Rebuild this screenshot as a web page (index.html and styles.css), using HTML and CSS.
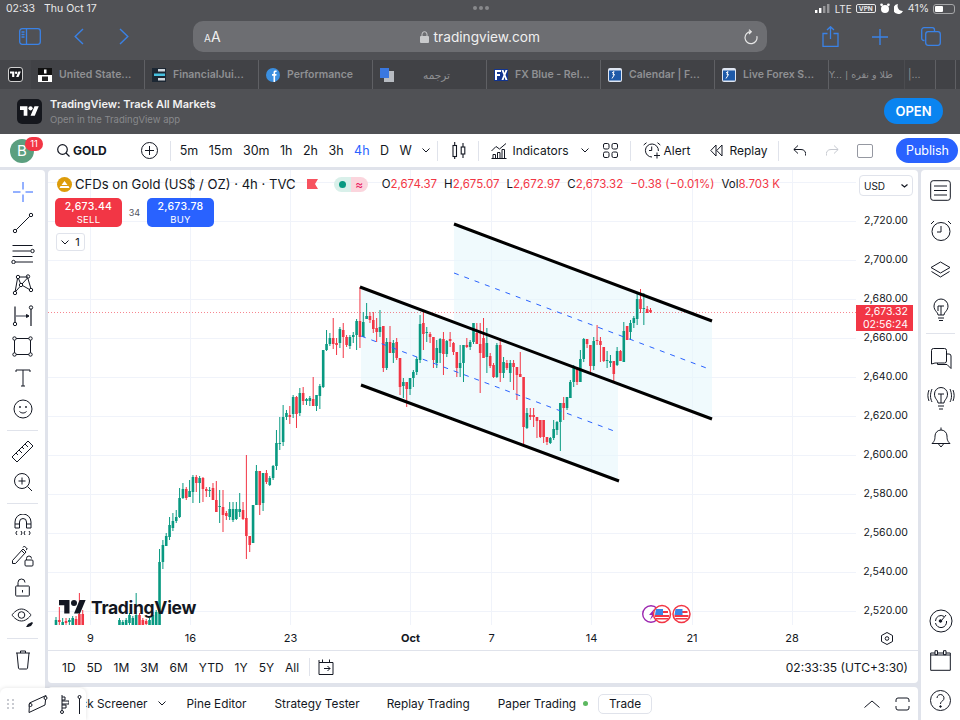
FILE: index.html
```html
<!DOCTYPE html>
<html lang="en">
<head>
    <meta charset="UTF-8">
    <title>TradingView - Gold</title>
    <link rel="stylesheet" href="styles.css">
</head>
<body>
    <svg class="defs" width="0" height="0">
        <symbol id="tv-mark" viewBox="0 0 36 28">
            <path d="M14 22H7V11H0V4h14v18zM28 22h-8l7.5-18h8L28 22z"/>
            <circle cx="20" cy="8" r="4"/>
        </symbol>
    </svg>

    <div class="safari">
        <div class="status-bar">
            <span class="status-time">02:33</span>
            <span class="status-date">Thu Oct 17</span>
            <div class="status-dots"><i></i><i></i><i></i></div>
            <div class="status-right">
                <svg width="15" height="9" viewBox="0 0 15 9" fill="#fff"><rect x="0" y="6" width="2.4" height="3"/><rect x="4" y="4" width="2.4" height="5"/><rect x="8" y="2" width="2.4" height="7" opacity=".4"/><rect x="12" y="0" width="2.4" height="9" opacity=".4"/></svg>
                <span class="status-lte">LTE</span>
                <span class="status-vpn">VPN</span>
                <svg width="10" height="11" viewBox="0 0 10 11" fill="#fff"><circle cx="5" cy="6" r="4"/><circle cx="1.6" cy="1.8" r="1.4"/><circle cx="8.4" cy="1.8" r="1.4"/></svg>
                <svg width="9" height="10" viewBox="0 0 9 10" fill="#fff"><path d="M4 0a5 5 0 1 0 5 7A5 5 0 0 1 4 0z"/></svg>
                <span class="status-pct">41%</span>
                <div class="battery"><div class="battery-fill"></div></div>
            </div>
        </div>

        <div class="safari-toolbar">
            <svg class="sf-sidebar" width="22" height="17" viewBox="0 0 22 17" fill="none" stroke="#3a82e6" stroke-width="1.3"><rect x=".7" y=".7" width="20.6" height="15.6" rx="2.5"/><path d="M7.5 .7v15.6M2.5 4h3M2.5 6.5h3M2.5 9h3"/></svg>
            <svg class="sf-back" width="10" height="17" viewBox="0 0 10 17" fill="none" stroke="#3a82e6" stroke-width="1.4"><path d="M9 1 1.2 8.5 9 16"/></svg>
            <svg class="sf-forward" width="10" height="17" viewBox="0 0 10 17" fill="none" stroke="#3a82e6" stroke-width="1.4"><path d="M1 1l7.8 7.5L1 16"/></svg>
            <div class="url-bar">
                <span class="url-aa"><small>A</small>A</span>
                <span class="url-host">
                    <svg width="9" height="12" viewBox="0 0 9 12" fill="#c9cacc"><path d="M1 5h7a1 1 0 0 1 1 1v5a1 1 0 0 1-1 1H1a1 1 0 0 1-1-1V6a1 1 0 0 1 1-1z"/><path d="M2 5V3.2a2.5 2.5 0 0 1 5 0V5" fill="none" stroke="#c9cacc"/></svg>
                    tradingview.com
                </span>
                <svg class="url-reload" width="14" height="16" viewBox="0 0 14 16" fill="none" stroke="#e6e6e6" stroke-width="1.2"><path d="M7 2.7a6 6 0 1 0 5.8 4.4M5 .6l2.3 2.1L5 5"/></svg>
            </div>
            <svg class="sf-share" width="17" height="21" viewBox="0 0 17 21" fill="none" stroke="#3a82e6" stroke-width="1.3"><path d="M5.5 7.5H1v12.8h15V7.5h-4.5M8.5 13V1M5 4l3.5-3.3L12 4"/></svg>
            <svg class="sf-plus" width="16" height="16" viewBox="0 0 16 16" fill="none" stroke="#3a82e6" stroke-width="1.4"><path d="M8 0v16M0 8h16"/></svg>
            <svg class="sf-tabs" width="20" height="19" viewBox="0 0 20 19" fill="none" stroke="#3a82e6" stroke-width="1.3"><rect x="4.7" y="4.7" width="14.6" height="13.6" rx="2.5"/><path d="M3.5 13.5H3A2.3 2.3 0 0 1 .7 11.2V3A2.3 2.3 0 0 1 3 .7h8.3A2.3 2.3 0 0 1 13.5 3v1"/></svg>
        </div>

        <div class="tabs">
            <div class="tab-pin">
                <div class="tab-pin-icon"><svg width="11" height="9" fill="#fff"><use href="#tv-mark"/></svg></div>
            </div>
            <div class="tab">
                <svg class="tab-icon" width="14" height="14" viewBox="0 0 14 14"><rect width="14" height="14" fill="#111"/><rect y="7" width="14" height="7" fill="#fff"/><rect x="6" y="1.5" width="2.5" height="4" fill="#fff"/><rect x="4" y="8.5" width="6" height="4.5" fill="#222"/></svg>
                <span>United State...</span>
            </div>
            <div class="tab">
                <svg class="tab-icon" width="14" height="14" viewBox="0 0 14 14"><rect width="14" height="14" fill="#1c2733"/><rect x="6" y="1" width="7" height="2.5" fill="#cfd6dc"/><rect x="2" y="5.5" width="11" height="2.5" fill="#46c1e0"/><rect x="6" y="10" width="7" height="2.5" fill="#cfd6dc"/></svg>
                <span>FinancialJui...</span>
            </div>
            <div class="tab">
                <svg class="tab-icon" width="14" height="14" viewBox="0 0 14 14"><circle cx="7" cy="7" r="7" fill="#3b8fe0"/><path d="M7.5 14V7.8H6V6h1.5V4.4C7.5 3 8.4 2.4 9.6 2.4h1V4H9.8c-.5 0-.7.3-.7.7V6h1.5l-.3 1.8H9.1V14z" fill="#fff"/></svg>
                <span>Performance</span>
            </div>
            <div class="tab">
                <svg class="tab-icon" width="14" height="14" viewBox="0 0 14 14"><rect x="4" y="3" width="10" height="11" fill="#b8bcc2"/><rect width="9" height="10" fill="#3a78e0"/></svg>
                <span class="tab-rtl" dir="rtl">ترجمه</span>
            </div>
            <div class="tab">
                <svg class="tab-icon" width="14" height="12" viewBox="0 0 14 12"><rect width="14" height="12" fill="#12348f"/><rect x="1" y="1" width="6" height="2" fill="#fff"/><rect x="1" y="1" width="2" height="10" fill="#fff"/><rect x="1" y="5" width="5" height="2" fill="#fff"/><path d="M7.5 1h2l1 3 1-3h2l-2 5 2 5h-2l-1-3-1 3h-2l2-5z" fill="#fff"/></svg>
                <span>FX Blue - Rel...</span>
            </div>
            <div class="tab">
                <svg class="tab-icon" width="14" height="14" viewBox="0 0 14 14"><rect width="14" height="14" rx="2" fill="#dfe6f2"/><rect x="1" y="2.5" width="12" height="10" fill="#1e5aa8"/><path d="M4 5l2-1.5L5 7l1.5-.5-2.5 4" stroke="#fff" fill="none"/></svg>
                <span>Calendar | F...</span>
            </div>
            <div class="tab">
                <svg class="tab-icon" width="14" height="14" viewBox="0 0 14 14"><rect width="14" height="14" rx="2" fill="#dfe6f2"/><rect x="1" y="2.5" width="12" height="10" fill="#1e5aa8"/><path d="M4 5l2-1.5L5 7l1.5-.5-2.5 4" stroke="#fff" fill="none"/></svg>
                <span>Live Forex S...</span>
            </div>
            <div class="tab tab-narrow"><span class="tab-clip">Y... | طلا و نقره</span></div>
            <div class="tab tab-tiny"><span>|...</span></div>
            <div class="tab tab-mini"></div>
            <div class="tab tab-last"></div>
        </div>

        <div class="smart-banner">
            <div class="banner-icon"><svg width="19" height="15" fill="#fff"><use href="#tv-mark"/></svg></div>
            <div class="banner-text">
                <div class="banner-title">TradingView: Track All Markets</div>
                <div class="banner-sub">Open in the TradingView app</div>
            </div>
            <div class="banner-open">OPEN</div>
        </div>
    </div>

    <div class="tv-header">
        <div class="avatar">B<span class="avatar-badge">11</span></div>
        <div class="symbol">
            <svg width="13" height="13" viewBox="0 0 13 13" fill="none" stroke="#131722" stroke-width="1.2"><circle cx="5.5" cy="5.5" r="4.8"/><path d="M9 9l3.5 3.5"/></svg>
            GOLD
        </div>
        <svg class="compare" width="17" height="17" viewBox="0 0 17 17" fill="none" stroke="#131722"><circle cx="8.5" cy="8.5" r="8"/><path d="M8.5 4v9M4 8.5h9"/></svg>
        <div class="hdr-sep sep-intervals"></div>
        <div class="intervals">
            <span>5m</span><span>15m</span><span>30m</span><span>1h</span><span>2h</span><span>3h</span><span class="active">4h</span><span>D</span><span>W</span>
            <svg width="8" height="5" viewBox="0 0 8 5" fill="none" stroke="#131722"><path d="M.5.5 4 4 7.5.5"/></svg>
        </div>
        <div class="hdr-sep sep-style"></div>
        <svg class="candle-style" width="14" height="17" viewBox="0 0 14 17" fill="none" stroke="#131722" stroke-width="1.1"><rect x="1" y="3.5" width="3.5" height="11"/><path d="M2.7 0v3.5M2.7 14.5V17M11 1v4M11 12v4"/><rect x="9.2" y="5" width="3.6" height="7"/></svg>
        <div class="hdr-sep sep-ind"></div>
        <svg class="ind-icon" width="16" height="16" viewBox="0 0 16 16" fill="none" stroke="#131722"><path d="M.5 8 5 3.5 8.5 6 15 .5M.5 15.5h15M2 15.5v-4h2.5v4M6.5 15.5v-6H9v6M11 15.5v-9h2.5v9"/></svg>
        <span class="hdr-text ind-label">Indicators</span>
        <svg class="ind-caret" width="8" height="5" viewBox="0 0 8 5" fill="none" stroke="#131722"><path d="M.5.5 4 4 7.5.5"/></svg>
        <svg class="layouts" width="15" height="15" viewBox="0 0 15 15" fill="none" stroke="#131722"><rect x=".5" y=".5" width="5.5" height="5.5" rx="1.5"/><rect x="9" y=".5" width="5.5" height="5.5" rx="1.5"/><rect x=".5" y="9" width="5.5" height="5.5" rx="1.5"/><rect x="9" y="9" width="5.5" height="5.5" rx="1.5"/></svg>
        <div class="hdr-sep sep-alert"></div>
        <svg class="alert-icon" width="18" height="17" viewBox="0 0 18 17" fill="none" stroke="#131722"><path d="M9 15A6.5 6.5 0 1 1 15.4 9M.7 3 3.5.7M17.3 3 14.5.7M8.7 4.5V8.5H6M14 10.5v6M11 13.5h6"/></svg>
        <span class="hdr-text alert-label">Alert</span>
        <svg class="replay-icon" width="13" height="13" viewBox="0 0 13 13" fill="none" stroke="#131722"><path d="M6 1 .8 6.5 6 12zM12 1 6.8 6.5 12 12z"/></svg>
        <span class="hdr-text replay-label">Replay</span>
        <div class="hdr-sep sep-undo"></div>
        <svg class="undo-icon" width="13" height="11" viewBox="0 0 13 11" fill="none" stroke="#131722"><path d="M5 .5.8 4.5 5 8.5M1 4.5h7a4.5 4.5 0 0 1 4.5 6"/></svg>
        <svg class="redo-icon" width="13" height="11" viewBox="0 0 13 11" fill="none" stroke="#c6c9d0"><path d="M8 .5l4.2 4L8 8.5M12 4.5H5A4.5 4.5 0 0 0 .5 10.5"/></svg>
        <div class="hdr-square"></div>
        <div class="publish">Publish</div>
    </div>

    <div class="workspace">
        <div class="left-tools">
            <div class="tool"><svg width="22" height="22" viewBox="0 0 22 22" fill="none" stroke="#2962ff"><path d="M1 11h7.5M13.5 11H21M11 1v7.5M11 13.5V21"/></svg></div>
            <div class="tool"><svg width="22" height="22" viewBox="0 0 22 22" fill="none" stroke="#131722"><circle cx="3" cy="19" r="1.7"/><circle cx="19" cy="3" r="1.7"/><path d="M4.3 17.7 17.7 4.3"/></svg></div>
            <div class="tool"><svg width="24" height="20" viewBox="0 0 24 20" fill="none" stroke="#131722"><path d="M1.5 1.5h20M1.5 7h18M1.5 12.5h20M4 18h18"/><circle cx="21.5" cy="7" r="1.7" fill="#fff"/><circle cx="2.5" cy="18" r="1.7" fill="#fff"/></svg></div>
            <div class="tool"><svg width="22" height="22" viewBox="0 0 22 22" fill="none" stroke="#131722"><circle cx="6" cy="3" r="1.7"/><circle cx="16" cy="2.5" r="1.7"/><circle cx="9" cy="11" r="1.7"/><circle cx="19" cy="16" r="1.7"/><circle cx="3" cy="19" r="1.7"/><path d="M6.5 4.5 8.5 9.5M15.5 4 10 10M7 3l9 0M10.5 11.5 17.5 15.5M8 12.5 3.7 17.5M15.8 4.2 18.8 14.3M5.5 4.5 3.2 17.3"/></svg></div>
            <div class="tool"><svg width="22" height="22" viewBox="0 0 22 22" fill="none" stroke="#131722"><path d="M3 1.5v16M19 4v17" stroke-width="1.2"/><circle cx="3" cy="19" r="1.7"/><circle cx="19" cy="2.5" r="1.7"/><path d="M4 11h12" stroke="#787b86" stroke-width="1.5"/><path d="M14.5 9.5 17 11l-2.5 1.5z" fill="#131722"/></svg></div>
            <div class="tool"><svg width="21" height="21" viewBox="0 0 21 21" fill="none" stroke="#131722"><rect x="2.5" y="2.5" width="16" height="16"/><circle cx="2.5" cy="2.5" r="1.7" fill="#fff"/><circle cx="18.5" cy="2.5" r="1.7" fill="#fff"/><circle cx="2.5" cy="18.5" r="1.7" fill="#fff"/><circle cx="18.5" cy="18.5" r="1.7" fill="#fff"/></svg></div>
            <div class="tool"><svg width="16" height="18" viewBox="0 0 16 18" fill="none" stroke="#131722"><path d="M1 3V1h14v2M8 1v16M6 17h4"/></svg></div>
            <div class="tool"><svg width="20" height="20" viewBox="0 0 20 20" fill="none" stroke="#131722"><circle cx="10" cy="10" r="9"/><circle cx="7" cy="8" r=".6"/><circle cx="13" cy="8" r=".6"/><path d="M6.5 12.5c2 2 5 2 7 0"/></svg></div>
            <div class="tool-sep"></div>
            <div class="tool"><svg width="23" height="23" viewBox="0 0 23 23" fill="none" stroke="#131722"><path d="M1 17 17 1l5 5L6 22zM5 13l2 2M8 10l3 3M11 7l2 2M14 4l3 3"/></svg></div>
            <div class="tool"><svg width="20" height="20" viewBox="0 0 20 20" fill="none" stroke="#131722"><circle cx="9" cy="9" r="7.5"/><path d="M9 5.5v7M5.5 9h7M14.5 14.5 19 19"/></svg></div>
            <div class="tool-sep"></div>
            <div class="tool"><svg width="18" height="22" viewBox="0 0 18 22" fill="none" stroke="#131722"><path d="M1 14V8a8 8 0 0 1 16 0v6h-4.5V8a3.5 3.5 0 0 0-7 0v6zM1 10h4.5M12.5 10H17M3 17l-1.2 2 1.2 2M15 17l1.2 2-1.2 2M7 17l1 2-1 2M11 17l-1 2 1 2" stroke-linejoin="round"/></svg></div>
            <div class="tool"><svg width="23" height="22" viewBox="0 0 23 22" fill="none" stroke="#131722"><path d="M1.5 15.5 12 4l3 3L4.5 18.5H1.5zM10.5 5.5l3 3M12 2.5l1.3-1.5 3 3L15 5"/><rect x="14" y="15" width="8" height="6" rx="1"/><path d="M15.5 15v-1.5a2.5 2.5 0 0 1 5 0"/></svg></div>
            <div class="tool"><svg width="15" height="19" viewBox="0 0 15 19" fill="none" stroke="#131722"><rect x=".7" y="8" width="13.6" height="10" rx=".7"/><path d="M3 8V4.5a3.5 3.5 0 0 1 7 0M7.5 12v2.5"/></svg></div>
            <div class="tool"><svg width="24" height="20" viewBox="0 0 24 20" fill="none" stroke="#131722"><path d="M1 7s4-6 9.5-6S20 7 20 7s-4 6-9.5 6S1 7 1 7z"/><circle cx="10.5" cy="7" r="3.3"/><path d="M15 19l2-3 4-2 1 1-2 3-3 1z" fill="#131722" stroke="none"/></svg></div>
            <div class="tool-sep tool-sep-low"></div>
            <div class="tool"><svg width="16" height="20" viewBox="0 0 16 20" fill="none" stroke="#131722"><path d="M1 3h14M5.5 3V1h5v2M2 3l1.5 15.3a1 1 0 0 0 1 .7h7a1 1 0 0 0 1-.7L14 3"/></svg></div>
        </div>

        <div class="chart-col">
            <div class="chart-card">
                <div class="chart-pane">
                    <div class="plot">
                        <svg class="plot-svg" id="plot" width="808" height="455" viewBox="48 170 808 455" fill="none">
                            <g stroke="#f0f3fa">
                                <path d="M48 182.5H856M48 221.5H856M48 260.5H856M48 299.5H856M48 338.5H856M48 377.5H856M48 416.5H856M48 455.5H856M48 494.5H856M48 533.5H856M48 572.5H856M48 611.5H856"/>
                                <path d="M90.5 170V625M190.5 170V625M290.5 170V625M410.5 170V625M491.5 170V625M591.5 170V625M692.5 170V625M792.5 170V625"/>
                            </g>
                            <polygon points="361,287 618,384 618,481 361,385" fill="#e6f6fb" fill-opacity=".6"/>
                            <polygon points="454,224 712,321 712,419 454,322" fill="#e6f6fb" fill-opacity=".6"/>
                            <path d="M48 312.5H856" stroke="#f23645" stroke-opacity=".6" stroke-dasharray="1 2"/>
                            <g id="candles"></g>
                            <path d="M361 336 614 431M454 273 709 369" stroke="#2962ff" stroke-dasharray="5 6"/>
                            <path d="M360 287 712 419M361 385 619 481M454 224 712 321" stroke="#000" stroke-width="3"/>
                            <circle cx="651" cy="614" r="8.3" fill="#fff" stroke="#9c27b0" stroke-width="1.4"/>
                            <path d="M655 608l-6 7h3l-2 5 6-7h-3z" fill="#9c27b0"/>
                            <g class="flag"><circle cx="662" cy="614" r="8.5" fill="#fff" stroke="#f23645" stroke-width="1.5"/><path d="M656 611h12v2h-12zM655 615h14v2h-14zM656 618h12v1.5h-12z" fill="#f23645"/><path d="M656 609h7v6h-8z" fill="#3a86e8"/></g>
                            <g class="flag"><circle cx="681.5" cy="614" r="8.5" fill="#fff" stroke="#f23645" stroke-width="1.5"/><path d="M675.5 611h12v2h-12zM674.5 615h14v2h-14zM675.5 618h12v1.5h-12z" fill="#f23645"/><path d="M675.5 609h7v6h-8z" fill="#3a86e8"/></g>
                        </svg>

                        <div class="legend">
                            <div class="legend-main">
                                <svg width="15" height="15" viewBox="0 0 15 15"><circle cx="7.5" cy="7.5" r="7.5" fill="#dd9c0a"/><path d="M4.5 8 7.5 4l3 4z" fill="#fff"/><path d="M2.5 11l1-2h8l1 2z" fill="#fff"/></svg>
                                <span class="legend-title">CFDs on Gold (US$ / OZ) · 4h · TVC</span>
                                <svg class="legend-flag" width="11" height="10" viewBox="0 0 11 10"><path d="M0 0h11L8 5l3 5H0z" fill="#f7525f"/></svg>
                                <div class="legend-pill"><span class="pill-green"><i></i></span><span class="pill-pink">≈</span></div>
                                <div class="ohlc">
                                    <span>O<b>2,674.37</b></span><span>H<b>2,675.07</b></span><span>L<b>2,672.97</b></span><span>C<b>2,673.32</b></span><span><b>−0.38 (−0.01%)</b></span><span>Vol<b>8.703 K</b></span>
                                </div>
                            </div>
                            <div class="trade-row">
                                <div class="trade-btn sell"><strong>2,673.44</strong><span>SELL</span></div>
                                <span class="spread">34</span>
                                <div class="trade-btn buy"><strong>2,673.78</strong><span>BUY</span></div>
                            </div>
                            <div class="collapse">
                                <svg width="8" height="5" viewBox="0 0 8 5" fill="none" stroke="#131722"><path d="M.5.5 4 4 7.5.5"/></svg>
                                1
                            </div>
                        </div>

                        <div class="watermark">
                            <svg width="27" height="21" fill="#131722"><use href="#tv-mark"/></svg>
                            <span>TradingView</span>
                        </div>
                    </div>

                    <div class="price-scale">
                        <span>2,720.00</span><span>2,700.00</span><span>2,680.00</span><span>2,660.00</span><span>2,640.00</span><span>2,620.00</span><span>2,600.00</span><span>2,580.00</span><span>2,560.00</span><span>2,540.00</span><span>2,520.00</span>
                        <div class="currency">USD<svg width="7" height="4" viewBox="0 0 7 4" fill="none" stroke="#131722" stroke-width="1.2"><path d="M.5.5 3.5 3 6.5.5"/></svg></div>
                        <div class="price-tag">2,673.32<br>02:56:24</div>
                    </div>
                </div>

                <svg class="time-axis" width="870" height="25" viewBox="48 625 870 25">
                    <g class="time-labels">
                        <text x="90.5" y="642">9</text><text x="190.5" y="642">16</text><text x="290.5" y="642">23</text><text x="410.5" y="642" class="oct">Oct</text><text x="491.5" y="642">7</text><text x="591.5" y="642">14</text><text x="692" y="642">21</text><text x="792" y="642">28</text>
                    </g>
                    <path d="M887 632.5l5.5 3v6l-5.5 3-5.5-3v-6z" fill="none" stroke="#131722"/>
                    <circle cx="887" cy="638.5" r="1.8" fill="none" stroke="#131722"/>
                </svg>

                <div class="range-bar">
                    <div class="ranges"><span>1D</span><span>5D</span><span>1M</span><span>3M</span><span>6M</span><span>YTD</span><span>1Y</span><span>5Y</span><span>All</span></div>
                    <div class="range-sep"></div>
                    <svg class="goto" width="16" height="16" viewBox="0 0 16 16" fill="none" stroke="#131722"><path d="M1 3.5h14v12H1zM1 3.5V1M4.5 3V.5M11.5 3V.5M6 9.5h6M9.5 7l2.5 2.5L9.5 12"/></svg>
                    <div class="clock">02:33:35 (UTC+3:30)</div>
                </div>
            </div>

            <div class="bottom-bar">
                <span class="tab-screener">Stock Screener<svg width="8" height="5" viewBox="0 0 8 5" fill="none" stroke="#131722"><path d="M.5.5 4 4 7.5.5"/></svg></span>
                <span class="tab-pine">Pine Editor</span>
                <span class="tab-tester">Strategy Tester</span>
                <span class="tab-replay">Replay Trading</span>
                <span class="tab-paper">Paper Trading</span>
                <i class="paper-dot"></i>
                <span class="trade-pill">Trade</span>
                <svg class="bar-up" width="16" height="8" viewBox="0 0 16 8" fill="none" stroke="#131722"><path d="M.5 7.5 8 1l7.5 6.5"/></svg>
                <svg class="bar-max" width="15" height="14" viewBox="0 0 15 14" fill="none" stroke="#131722"><path d="M1 5V3a2 2 0 0 1 2-2h9a2 2 0 0 1 2 2v2M1 9v2a2 2 0 0 0 2 2h9a2 2 0 0 0 2-2V9"/></svg>
            </div>
        </div>

        <div class="right-tools">
            <div class="right-group">
                <div class="rtool"><svg width="21" height="21" viewBox="0 0 21 21" fill="none" stroke="#131722"><rect x=".7" y=".7" width="19.6" height="19.6" rx="2.5"/><path d="M4 6h13M4 10.5h13M4 15h13"/></svg></div>
                <div class="rtool"><svg width="22" height="21" viewBox="0 0 22 21" fill="none" stroke="#131722"><circle cx="11" cy="11.5" r="9"/><path d="M11 6v6H7M1 4l3-3M21 4l-3-3"/></svg></div>
                <div class="rtool"><svg width="21" height="18" viewBox="0 0 21 18" fill="none" stroke="#131722"><path d="M10.5 1 20 6.5 10.5 12 1 6.5zM1.5 10.5l9 5.5 9-5.5"/></svg></div>
                <div class="rtool"><svg width="16" height="23" viewBox="0 0 16 23" fill="none" stroke="#131722"><path d="M5 17c0-3-4-4-4-9a7 7 0 0 1 14 0c0 5-4 6-4 9zM5 13V8h6M8 8v9M5 20h6M6 22.5h4"/></svg></div>
                <div class="right-sep"></div>
                <div class="rtool"><svg width="22" height="21" viewBox="0 0 22 21" fill="none" stroke="#131722"><path d="M1.5 16V2.5a2 2 0 0 1 2-2h11a2 2 0 0 1 2 2V13a2 2 0 0 1-2 2H5l-3.5 1zM16.5 6H19a2 2 0 0 1 2 2v12.5l-4-4H7.5V15"/></svg></div>
                <div class="rtool"><svg width="28" height="24" viewBox="0 0 28 24" fill="none" stroke="#131722"><path d="M11 17c0-3-3.5-4-3.5-9a6.5 6.5 0 0 1 13 0c0 5-3.5 6-3.5 9zM11 8h6M14 8v9M11 20h6M12 23h4M5 3C3 8 3 12 5 16M2 4C.5 8 .5 11 2 15M23 3c2 5 2 9 0 13M26 4c1.5 4 1.5 7 0 11"/></svg></div>
                <div class="rtool"><svg width="20" height="21" viewBox="0 0 20 21" fill="none" stroke="#131722"><path d="M1 16.5c2-2 3-3 3-7.5a6 6 0 0 1 12 0c0 4.5 1 5.500 3 7.500zM1 16.500h18M7.500 17l2.500 3 2.500-3M10 3V.5"/></svg></div>
            </div>
            <div class="right-group">
                <div class="rtool"><svg width="24" height="24" viewBox="0 0 24 24" fill="none" stroke="#131722"><circle cx="12" cy="12" r="11"/><path d="M6.5 12a5.5 5.5 0 0 1 8.5-4.6M17.5 12A5.5 5.5 0 0 1 6.5 14M12.5 11.5 17 6"/><circle cx="11.5" cy="12" r="1.3" fill="#131722"/></svg></div>
                <div class="rtool"><svg width="21" height="21" viewBox="0 0 21 21" fill="none" stroke="#131722"><path d="M.7 5h19.6v15.3H.7zM.7 5V3M20.3 5V3M5 .7h2.5v4H5zM13.5 .7H16v4h-2.5zM7.5 3h6M16 3h4.3M.7 3H5"/></svg></div>
                <div class="rtool"><svg width="21" height="21" viewBox="0 0 21 21" fill="none" stroke="#131722"><circle cx="10.5" cy="10.5" r="10"/><path d="M7 8a3.5 3.5 0 1 1 5.5 2.9c-1.3.9-2 1.7-2 3.1"/><circle cx="10.5" cy="16.5" r=".8" fill="#131722"/></svg></div>
            </div>
        </div>

        <div class="float-panel">
            <div class="grip"><i></i><i></i><i></i><i></i><i></i><i></i></div>
            <svg width="20" height="20" viewBox="0 0 20 20" fill="none" stroke="#131722"><path d="M1.5 9 18 1.5 17 11 1 18.5zM18 3 16 5M2.5 9.5l-1.5 3"/><circle cx="17.5" cy="4" r="1.5" fill="#fff"/><circle cx="2.5" cy="11" r="1.5" fill="#fff"/></svg>
            <svg class="panel-align" width="9" height="19" viewBox="0 0 9 19" fill="none" stroke="#131722"><path d="M2 0v16M2 2h3v3H2M2 6h7v3H2M2 10h4v3H2"/><circle cx="2" cy="17" r="1.5" fill="#fff"/></svg>
            <svg class="panel-pin" width="5" height="19" viewBox="0 0 5 19" fill="none" stroke="#131722"><circle cx="2.5" cy="2" r="1.5"/><path d="M2.5 3.5V19"/></svg>
        </div>
    </div>

    <script src="chart.js"></script>
</body>
</html>
```
FILE: styles.css
```css
* {
    box-sizing: border-box;
}

html, body {
    margin: 0;
    padding: 0;
}

body {
    position: relative;
    width: 960px;
    height: 720px;
    overflow: hidden;
    display: flex;
    flex-direction: column;
    font-family: "Inter", "Noto Sans", sans-serif;
    color: #131722;
    background-color: #e0e3eb;
}

svg {
    display: block;
    flex: none;
}

.defs {
    position: absolute;
}

/* safari chrome */
.safari {
    height: 134px;
    background-color: #505155;
    flex: none;
}

.status-bar {
    height: 17px;
    display: flex;
    align-items: center;
    position: relative;
    padding: 0 5px 0 6px;
    color: #e8e8e9;
    font-size: 10.5px;
}

.status-date {
    margin-left: 9px;
}

.status-dots {
    position: absolute;
    left: 473px;
    top: 6px;
    display: flex;
    gap: 2px;
}

.status-dots i {
    width: 4px;
    height: 4px;
    border-radius: 50%;
    background-color: #88898c;
}

.status-right {
    margin-left: auto;
    display: flex;
    align-items: center;
    gap: 4px;
}

.status-lte {
    margin-left: 1px;
    font-size: 10px;
}

.status-vpn {
    font-size: 6.5px;
    font-weight: 700;
    border: 1px solid #e8e8e9;
    border-radius: 2px;
    padding: 0 2px;
    height: 9px;
    line-height: 8px;
}

.status-pct {
    margin-left: 1px;
}

.battery {
    width: 22px;
    height: 10px;
    border: 1px solid #a5a6a8;
    border-radius: 3px;
    padding: 1px;
}

.battery-fill {
    width: 8px;
    height: 6px;
    border-radius: 1px;
    background-color: #fff;
}

.safari-toolbar {
    height: 43px;
    display: flex;
    align-items: center;
    padding-bottom: 4px;
}

.sf-sidebar {
    margin-left: 19px;
}

.sf-back {
    margin-left: 33px;
}

.sf-forward {
    margin-left: 35px;
}

.url-bar {
    margin-left: 64px;
    width: 574px;
    height: 31px;
    border-radius: 10px;
    background-color: #6d6e72;
    display: flex;
    align-items: center;
    padding: 0 9px 0 11px;
    color: #f0f0f0;
}

.url-aa {
    font-size: 14px;
}

.url-aa small {
    font-size: 10px;
}

.url-host {
    display: flex;
    align-items: center;
    gap: 5px;
    margin-left: 199px;
    font-size: 13.7px;
}

.url-reload {
    margin-left: auto;
}

.sf-share {
    margin-left: 55px;
}

.sf-plus {
    margin-left: 33px;
}

.sf-tabs {
    margin-left: 33px;
}

.tabs {
    height: 29px;
    display: flex;
    background-color: #45464a;
}

.tab-pin {
    width: 31px;
    flex: none;
    display: flex;
    align-items: center;
    justify-content: center;
}

.tab-pin-icon {
    width: 15px;
    height: 15px;
    background-color: #1b1c20;
    border: 1px solid #d0d0d0;
    border-radius: 3px;
    display: flex;
    align-items: center;
    justify-content: center;
}

.tab {
    width: 114px;
    flex: none;
    display: flex;
    align-items: center;
    padding-left: 7px;
    background-color: #414246;
    border-right: 1px solid #5f6064;
    color: #8f9093;
    font-size: 10.5px;
    font-weight: 600;
    white-space: nowrap;
    overflow: hidden;
}

.tab-icon {
    margin-right: 7px;
}

.tab-rtl {
    margin-left: 22px;
    font-family: "DejaVu Sans", sans-serif;
    font-weight: 400;
}

.tab-narrow {
    width: 76px;
    padding-left: 0;
    font-weight: 400;
    border-right-color: #4b4c50;
}

.tab-clip {
    font-family: "DejaVu Sans", sans-serif;
    font-size: 9.5px;
}

.tab-tiny {
    width: 31px;
    padding-left: 3px;
    font-weight: 400;
}

.tab-mini {
    width: 20px;
}

.tab-last {
    flex: 1;
    width: auto;
    min-width: 0;
    padding-left: 0;
    border-right: none;
}

.smart-banner {
    height: 45px;
    display: flex;
    align-items: center;
    padding: 0 17px 1px;
}

.banner-icon {
    width: 25px;
    height: 25px;
    border-radius: 5px;
    background-color: #15171d;
    display: flex;
    align-items: center;
    justify-content: center;
}

.banner-text {
    margin-left: 8px;
}

.banner-title {
    font-size: 11px;
    font-weight: 600;
    color: #f2f2f2;
}

.banner-sub {
    margin-top: 3px;
    font-size: 9.5px;
    color: #88898c;
}

.banner-open {
    margin-left: auto;
    width: 59px;
    height: 26px;
    border-radius: 13px;
    background-color: #0a84f0;
    color: #fff;
    font-size: 13px;
    font-weight: 600;
    line-height: 26px;
    text-align: center;
}

/* tradingview header */
.tv-header {
    height: 33px;
    flex: none;
    display: flex;
    align-items: center;
    background-color: #fff;
    font-size: 12.5px;
}

.avatar {
    position: relative;
    margin-left: 10px;
    width: 24px;
    height: 24px;
    border-radius: 50%;
    background-color: #5b9f7f;
    color: #fff;
    font-size: 15px;
    line-height: 24px;
    text-align: center;
}

.avatar-badge {
    position: absolute;
    left: 15px;
    top: -2px;
    width: 18px;
    height: 14px;
    border-radius: 7px;
    background-color: #f23645;
    color: #fff;
    font-size: 9.5px;
    line-height: 14px;
}

.symbol {
    margin-left: 23px;
    display: flex;
    align-items: center;
    gap: 3px;
    font-weight: 700;
    font-size: 12px;
}

.compare {
    margin-left: 34px;
}

.hdr-sep {
    width: 1px;
    height: 20px;
    flex: none;
    background-color: #e0e3eb;
}

.sep-intervals {
    margin-left: 12px;
}

.intervals {
    margin-left: 9px;
    display: flex;
    align-items: center;
    gap: 10.5px;
}

.intervals .active {
    color: #2962ff;
}

.sep-style {
    margin-left: 7px;
}

.candle-style {
    margin-left: 14px;
}

.sep-ind {
    margin-left: 12px;
}

.ind-icon {
    margin-left: 12px;
}

.hdr-text {
    font-size: 12px;
}

.ind-label {
    margin-left: 5px;
}

.ind-caret {
    margin-left: 12px;
}

.layouts {
    margin-left: 14px;
}

.sep-alert {
    margin-left: 12px;
}

.alert-icon {
    margin-left: 12px;
}

.alert-label {
    margin-left: 3px;
}

.replay-icon {
    margin-left: 20px;
}

.replay-label {
    margin-left: 6px;
}

.sep-undo {
    margin-left: 11px;
}

.undo-icon {
    margin-left: 14px;
}

.redo-icon {
    margin-left: 20px;
}

.hdr-square {
    margin-left: 18px;
    width: 16px;
    height: 14px;
    border: 1px solid #9598a1;
    border-radius: 2px;
}

.publish {
    margin-left: 23px;
    width: 62px;
    height: 25px;
    flex: none;
    border-radius: 13px;
    background-color: #2962ff;
    color: #fff;
    line-height: 25px;
    text-align: center;
}

/* main area */
.workspace {
    position: relative;
    margin-top: 3px;
    flex: 1;
    min-height: 0;
    display: flex;
    background-color: #e0e3eb;
}

.left-tools {
    width: 45px;
    flex: none;
    background-color: #fff;
    border-radius: 0 4px 0 0;
    padding-top: 7px;
}

.tool {
    height: 30.9px;
    display: flex;
    align-items: center;
    justify-content: center;
}

.tool-sep {
    height: 1px;
    margin: 5.5px 7px;
    background-color: #e0e3eb;
}

.tool-sep-low {
    margin-top: 5px;
}

.chart-col {
    margin-left: 3px;
    width: 870px;
    flex: none;
    display: flex;
    flex-direction: column;
}

.chart-card {
    height: 513px;
    flex: none;
    background-color: #fff;
    border-radius: 4px;
    overflow: hidden;
    display: flex;
    flex-direction: column;
}

.chart-pane {
    height: 455px;
    flex: none;
    display: flex;
}

.plot {
    position: relative;
    width: 808px;
    height: 455px;
    flex: none;
    overflow: hidden;
}

.plot-svg {
    position: absolute;
    left: 0;
    top: 0;
}

.legend {
    position: absolute;
    left: 9px;
    top: 6px;
}

.legend-main {
    height: 16px;
    display: flex;
    align-items: center;
}

.legend-title {
    margin-left: 3px;
    font-size: 13.1px;
    white-space: nowrap;
}

.legend-flag {
    margin-left: 11px;
}

.legend-pill {
    margin-left: 16px;
    width: 34px;
    height: 15px;
    display: flex;
    border-radius: 8px;
    overflow: hidden;
}

.pill-green {
    width: 17px;
    background-color: #d9f0ea;
    display: flex;
    align-items: center;
    justify-content: center;
}

.pill-green i {
    width: 7px;
    height: 7px;
    border-radius: 50%;
    background-color: #089981;
}

.pill-pink {
    width: 17px;
    background-color: #fbd5dd;
    color: #e91e63;
    font-size: 12px;
    line-height: 15px;
    text-align: center;
}

.ohlc {
    margin-left: 14px;
    display: flex;
    gap: 7px;
    font-size: 11.5px;
    white-space: nowrap;
}

.ohlc b {
    font-weight: 400;
    color: #f23645;
}

.trade-row {
    margin-top: 6px;
    display: flex;
    align-items: center;
    margin-left: -2px;
}

.trade-btn {
    width: 67px;
    height: 29px;
    border-radius: 5px;
    color: #fff;
    display: flex;
    flex-direction: column;
    align-items: center;
    justify-content: center;
    font-size: 9.5px;
    line-height: 12px;
    letter-spacing: .3px;
}

.trade-btn strong {
    font-size: 10.5px;
    font-weight: 500;
    line-height: 14px;
}

.sell {
    background-color: #f23645;
}

.buy {
    background-color: #2962ff;
}

.spread {
    width: 25px;
    text-align: center;
    font-size: 9px;
    color: #50535e;
}

.collapse {
    margin-top: 6px;
    margin-left: -1px;
    width: 29px;
    height: 18px;
    border: 1px solid #e0e3eb;
    border-radius: 3px;
    display: flex;
    align-items: center;
    justify-content: center;
    gap: 6px;
    font-size: 11px;
}

.watermark {
    position: absolute;
    left: 11px;
    top: 427px;
    display: flex;
    align-items: center;
    gap: 5px;
    color: #131722;
}

.watermark span {
    font-size: 17.5px;
    font-weight: 700;
    letter-spacing: -.3px;
    line-height: 21px;
}

.price-scale {
    position: relative;
    width: 62px;
    flex: none;
    display: flex;
    flex-direction: column;
    align-items: flex-end;
    padding: 44px 10px 0 0;
    font-size: 10.5px;
    color: #131722;
    overflow: hidden;
}

.price-scale > span {
    height: 39px;
    flex: none;
    line-height: 14px;
}

.currency {
    position: absolute;
    left: 3px;
    top: 5px;
    width: 54px;
    height: 21px;
    border: 1px solid #e0e3eb;
    border-radius: 4px;
    padding: 0 4px;
    display: flex;
    align-items: center;
    justify-content: space-between;
    font-size: 10px;
}

.price-tag {
    position: absolute;
    left: 0;
    top: 135px;
    width: 57px;
    height: 26px;
    background-color: #f23645;
    color: #fff;
    line-height: 13px;
    text-align: right;
    padding-right: 5px;
    font-size: 10.5px;
}

.time-axis {
    flex: none;
}

.time-labels text {
    font-size: 11px;
    fill: #131722;
    text-anchor: middle;
}

.time-labels .oct {
    font-weight: 700;
}

.range-bar {
    height: 33px;
    flex: none;
    border-top: 1px solid #e0e3eb;
    display: flex;
    align-items: center;
    font-size: 12px;
}

.ranges {
    margin-left: 14px;
    display: flex;
    gap: 11px;
}

.range-sep {
    margin-left: 10px;
    width: 1px;
    height: 18px;
    background-color: #e0e3eb;
}

.goto {
    margin-left: 8px;
}

.clock {
    margin-left: auto;
    margin-right: 10px;
    font-size: 12px;
}

.bottom-bar {
    margin-top: 4px;
    height: 33px;
    flex: none;
    background-color: #fff;
    border-radius: 4px 4px 0 0;
    display: flex;
    align-items: center;
    font-size: 11.8px;
    white-space: nowrap;
}

.tab-screener {
    margin-left: 14px;
    display: flex;
    align-items: center;
    gap: 10px;
}

.tab-pine {
    margin-left: 21px;
}

.tab-tester {
    margin-left: 28px;
}

.tab-replay {
    margin-left: 27px;
}

.tab-paper {
    margin-left: 28px;
}

.paper-dot {
    margin-left: 6.5px;
    width: 5px;
    height: 5px;
    flex: none;
    border-radius: 50%;
    background-color: #5cb860;
}

.trade-pill {
    margin-left: 10.5px;
    width: 54px;
    height: 20px;
    border: 1px solid #e0e3eb;
    border-radius: 5px;
    line-height: 18px;
    text-align: center;
}

.bar-up {
    margin-left: 212px;
}

.bar-max {
    margin-left: 15px;
}

.right-tools {
    margin-left: 3px;
    flex: 1;
    background-color: #fff;
    border-radius: 4px 0 0 0;
    display: flex;
    flex-direction: column;
    justify-content: space-between;
    padding-top: 1px;
}

.rtool {
    height: 39.5px;
    display: flex;
    align-items: center;
    justify-content: center;
}

.right-sep {
    height: 1px;
    margin: 4px 5px 5px;
    background-color: #e0e3eb;
}

.float-panel {
    position: absolute;
    left: 0;
    bottom: 0;
    width: 86px;
    height: 32px;
    background-color: #fff;
    border-radius: 6px 6px 0 0;
    box-shadow: 0 0 4px rgba(0, 0, 0, .12);
    display: flex;
    align-items: center;
    padding-left: 7px;
}

.grip {
    width: 7px;
    display: grid;
    grid-template-columns: 2px 2px;
    gap: 2px 3px;
    margin-right: 14px;
}

.grip i {
    width: 2px;
    height: 2px;
    background-color: #c9cbd1;
}

.panel-align {
    margin-left: 12px;
}

.panel-pin {
    margin-left: 8px;
}
```
FILE: chart.js
```js
// top, bottom, high, low (page y) and direction for each 4h bar, starting at x = 56
var bars = [
    [620,625,617,625,'g'],[620,622,607,625,'r'],[622,625,618,625,'g'],[621,623,618,625,'r'],
    [620,622,618,625,'g'],[618,625,616,625,'g'],[619,625,616,625,'r'],[614,625,593,625,'r'],
    [614,625,610,625,'r'],
    null,null,null,null,null,null,null,null,null,null,
    [620,625,618,625,'g'],[622,625,620,625,'g'],[620,625,618,625,'g'],[615,623,613,625,'g'],
    [618,625,616,625,'g'],[615,625,593,625,'g'],[615,625,613,625,'r'],[620,625,618,625,'r'],
    [621,624,619,625,'r'],[620,625,618,625,'g'],[615,625,612,625,'g'],[612,625,610,625,'g'],
    [562,625,549,625,'g'],[545,562,540,569,'g'],[536,546,533,546,'g'],[525,537,517,540,'g'],
    [521,528,513,531,'g'],[517,521,510,523,'g'],[498,517,488,518,'g'],[489,498,483,499,'g'],
    [489,498,487,500,'r'],[491,497,480,497,'g'],[477,492,475,503,'g'],[477,483,475,492,'r'],
    [478,483,476,503,'g'],[478,489,477,502,'r'],[489,491,487,497,'r'],[490,491,487,497,'g'],
    [488,500,483,500,'r'],[500,512,481,512,'r'],[506,507,490,523,'g'],[507,515,490,532,'r'],
    [513,516,511,520,'r'],[509,517,502,520,'g'],[509,520,502,522,'g'],[509,519,502,520,'g'],
    [509,512,493,517,'g'],[510,519,502,520,'r'],[518,536,455,559,'r'],[536,545,536,552,'r'],
    [505,543,505,543,'g'],[471,505,465,505,'g'],[471,505,471,515,'r'],[473,503,473,511,'g'],
    [473,482,470,484,'r'],[478,485,476,486,'g'],[466,478,465,480,'g'],[443,466,430,470,'g'],
    [443,444,417,450,'g'],[417,442,405,446,'g'],[413,417,410,420,'g'],[415,417,406,424,'r'],
    [397,414,395,418,'g'],[397,414,396,428,'r'],[393,413,388,416,'g'],[393,401,387,405,'r'],
    [399,401,398,405,'g'],[398,401,396,406,'g'],[399,406,377,406,'r'],[395,406,395,411,'g'],
    [386,396,384,409,'g'],[350,387,350,388,'g'],[344,350,330,351,'g'],[338,344,333,346,'g'],
    [338,344,318,349,'r'],[343,345,338,355,'r'],[329,343,327,348,'g'],[330,337,323,358,'r'],
    [337,345,335,347,'r'],[337,346,335,349,'g'],[335,337,332,343,'g'],[321,335,319,350,'g'],
    [321,337,287,348,'r'],[322,337,312,337,'g'],[316,319,303,319,'g'],[316,320,312,323,'r'],
    [320,329,312,333,'r'],[328,332,318,342,'r'],[327,332,310,337,'g'],[326,368,326,372,'r'],
    [342,368,338,370,'g'],[342,353,326,353,'r'],[343,353,340,363,'g'],[342,358,338,360,'r'],
    [358,387,358,395,'r'],[382,386,378,398,'g'],[382,389,382,407,'r'],[378,389,378,395,'g'],
    [372,378,370,387,'g'],[359,372,357,375,'g'],[324,360,315,363,'g'],[323,334,312,350,'r'],
    [332,333,327,342,'g'],[334,337,332,343,'r'],[337,360,337,368,'r'],[348,363,340,368,'g'],
    [339,353,338,363,'g'],[339,354,332,375,'r'],[341,354,340,357,'g'],[339,341,332,347,'r'],
    [343,352,342,355,'r'],[352,368,352,377,'r'],[363,368,345,377,'g'],[345,363,345,382,'g'],
    [345,347,338,348,'r'],[342,347,340,350,'g'],[323,342,323,344,'g'],[333,344,323,344,'r'],
    [344,353,323,393,'r'],[338,358,318,358,'r'],[343,357,328,373,'g'],[356,366,353,368,'r'],
    [365,377,363,378,'r'],[345,377,343,378,'g'],[345,373,338,382,'r'],[362,373,357,378,'g'],
    [363,368,360,370,'r'],[363,373,360,382,'g'],[363,367,360,390,'r'],[367,375,367,400,'r'],
    [374,377,352,377,'r'],[377,427,377,447,'r'],[413,428,408,429,'g'],[415,417,408,420,'r'],
    [415,417,408,427,'r'],[417,421,417,438,'r'],[420,437,420,438,'r'],[420,437,420,443,'r'],
    [437,442,437,445,'r'],[438,443,437,444,'g'],[429,438,420,440,'g'],[422,430,421,435,'g'],
    [403,422,403,451,'g'],[403,408,397,420,'r'],[397,408,397,410,'g'],[382,398,380,398,'g'],
    [367,382,365,387,'g'],[367,382,367,385,'r'],[359,382,350,382,'g'],[339,359,338,362,'g'],
    [339,344,339,348,'r'],[345,366,345,372,'r'],[341,366,337,370,'g'],[340,341,325,345,'r'],
    [341,345,337,362,'r'],[347,361,347,362,'r'],[360,361,351,368,'g'],[361,363,355,367,'g'],
    [361,374,361,382,'r'],[351,365,347,366,'g'],[351,361,350,361,'r'],[331,362,322,362,'g'],
    [326,340,326,340,'r'],[323,332,320,340,'g'],[318,323,316,328,'g'],[299,319,293,325,'g'],
    [299,309,289,313,'r'],[308,309,293,325,'g'],[309,313,306,313,'r'],[310,312,308,313,'r']
];

var group = document.getElementById('candles');
var svgNS = 'http://www.w3.org/2000/svg';

function addRect(x, y, w, h, color) {
    var r = document.createElementNS(svgNS, 'rect');
    r.setAttribute('x', x);
    r.setAttribute('y', y);
    r.setAttribute('width', w);
    r.setAttribute('height', h);
    r.setAttribute('fill', color);
    group.appendChild(r);
}

bars.forEach(function(bar, i) {
    if (!bar) return;
    var x = 56 + i * 3.34;
    var color = bar[4] === 'g' ? '#089981' : '#f23645';
    addRect(x - 0.5, bar[2], 1, bar[3] - bar[2], color);
    addRect(x - 1.3, bar[0], 2.6, bar[1] - bar[0], color);
});
```
